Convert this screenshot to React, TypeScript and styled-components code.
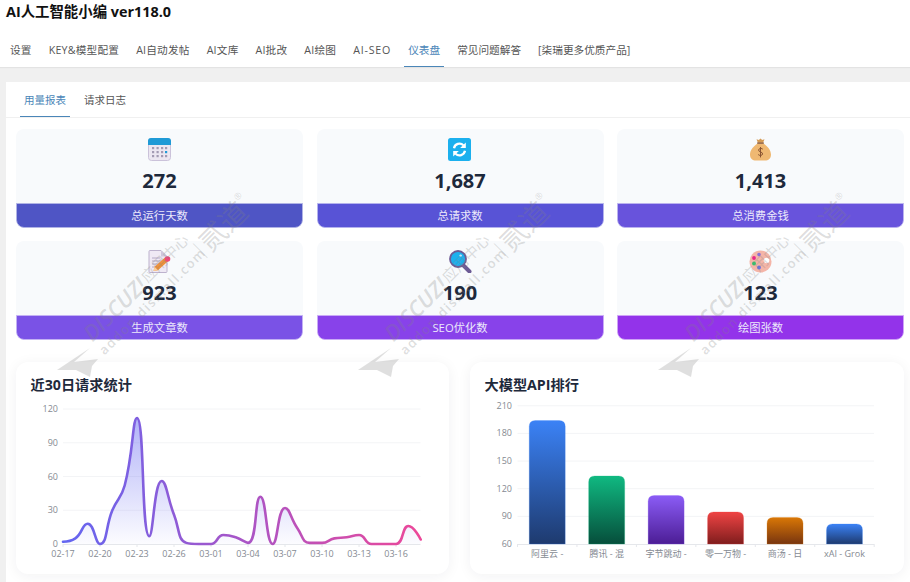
import React from "react";
import styled, { createGlobalStyle } from "styled-components";

const Global = createGlobalStyle`
  html, body { margin: 0; padding: 0; background: #f0f0f0; }
  body { font-family: "Open Sans", "Noto Sans CJK SC", sans-serif; overflow: hidden; }
  * { box-sizing: border-box; }
`;

const Page = styled.div`
  position: relative;
  width: 910px;
  height: 582px;
  overflow: hidden;
  background: #f0f0f0;
`;
const Header = styled.header`
  height: 67px;
  background: #fff;
  box-shadow: 0 1px 1px rgba(0, 0, 0, 0.05);
  display: flex;
  flex-direction: column;
`;
const Title = styled.h1`
  margin: 0;
  height: 31px;
  padding: 2px 0 0 6px;
  font-size: 14.4px;
  line-height: 20px;
  font-weight: 700;
  color: #111;
`;
const NavBar = styled.nav`
  flex: 1;
  display: flex;
  gap: 9px;
  padding-left: 6px;
`;
const Tab = styled.div<{ $active?: boolean; $track?: number }>`
  padding: 2px 4px 0;
  height: 100%;
  display: flex;
  align-items: center;
  white-space: nowrap;
  font-size: 10.67px;
  letter-spacing: ${(p) => p.$track ?? 0.2}px;
  color: ${(p) => (p.$active ? "#4a86b8" : "#555")};
  border-bottom: 1px solid ${(p) => (p.$active ? "#4a86b8" : "transparent")};
`;
const SubTab = styled(Tab)`
  padding-top: 0;
  font-size: 10.5px;
  letter-spacing: 0;
`;
const Panel = styled.main`
  margin: 15px 0 0 6px;
  height: 500px;
  background: #fff;
  display: flex;
  flex-direction: column;
`;
const SubNav = styled.div`
  height: 36px;
  flex: none;
  display: flex;
  gap: 10px;
  padding-left: 14px;
  border-bottom: 1px solid #f0f0f0;
`;
const Body = styled.div`
  padding: 11px 6px 0 10px;
`;
const StatGrid = styled.div`
  display: grid;
  grid-template-columns: repeat(3, 1fr);
  column-gap: 13.5px;
  row-gap: 13.5px;
`;
const StatCard = styled.div`
  height: 98.5px;
  border-radius: 8px;
  background: #f8fafc;
  display: flex;
  flex-direction: column;
  align-items: center;
  overflow: hidden;
`;
const StatTop = styled.div`
  flex: 1;
  display: flex;
  flex-direction: column;
  align-items: center;
  padding-top: 9px;
`;
const StatValue = styled.div`
  margin-top: 5px;
  font-size: 20px;
  line-height: 30px;
  font-weight: 700;
  color: #1e293b;
`;
const StatLabel = styled.div<{ $bg: string }>`
  width: 100%;
  height: 25px;
  flex: none;
  display: flex;
  align-items: center;
  justify-content: center;
  font-size: 11.3px;
  color: #ece9fb;
  background: ${(p) => p.$bg};
  border: 1px solid color-mix(in srgb, ${(p) => p.$bg} 45%, white);
  border-radius: 0 0 8px 8px;
`;
const ChartGrid = styled.div`
  margin-top: 22.5px;
  display: grid;
  grid-template-columns: 433px 434px;
  column-gap: 21px;
`;
const ChartCard = styled.section`
  height: 212px;
  background: #fff;
  border-radius: 12px;
  box-shadow: 0 2px 14px rgba(30, 41, 59, 0.06);
  overflow: hidden;
`;
const ChartTitle = styled.h2`
  margin: 0;
  height: 36px;
  padding: 13px 0 0 14.5px;
  font-size: 14.2px;
  line-height: 20px;
  font-weight: 700;
  color: #1e293b;
`;
const ChartSvg = styled.svg`
  display: block;
  text {
    font-family: "Open Sans", "Noto Sans CJK SC", sans-serif;
    font-size: 9px;
    fill: #858a92;
  }
`;
const WmUnit = styled.div<{ $x: number }>`
  position: absolute;
  left: ${(p) => p.$x}px;
  top: 340px;
  width: 0;
  height: 0;
  pointer-events: none;
  z-index: 5;
`;
const WmPlane = styled.svg`
  position: absolute;
  left: 0;
  top: 0;
  overflow: visible;
`;
const WmLine = styled.div<{ $dx: number; $dy: number; $size: number }>`
  position: absolute;
  left: ${(p) => p.$dx}px;
  top: ${(p) => p.$dy}px;
  display: flex;
  align-items: center;
  transform: rotate(-45deg);
  transform-origin: left bottom;
  white-space: nowrap;
  line-height: 1;
  font-size: ${(p) => p.$size}px;
  color: rgba(130, 130, 130, 0.27);
`;
const WmBrand = styled.span`
  font-style: italic;
  font-weight: 600;
  margin-right: 2px;
`;
const WmSmall = styled.span`
  font-size: 15px;
`;
const WmSplit = styled.span`
  font-weight: 300;
  font-size: 20px;
`;
const WmMark = styled.span`
  font-size: 9px;
  transform: translateY(-11px);
`;
const WmUrl = styled.span`
  letter-spacing: 1.5px;
  font-weight: 600;
`;

const CalendarIcon = () => (
  <svg width="23" height="23" viewBox="0 0 23 23">
    <rect x="0.5" y="0.5" width="22" height="22" rx="3" fill="#ece7f1" stroke="#cbc2da" />
    <path d="M0 7V3a3 3 0 0 1 3-3h17a3 3 0 0 1 3 3v4z" fill="#1f9ad6" />
    {[5, 9.5, 14, 18].flatMap((x, i) =>
      [10, 14, 18].map((y, j) => (
        <rect key={`${i}-${j}`} x={x - 1} y={y - 1} width="2.2" height="2.2" fill={i === 3 && j === 1 ? "#1f9ad6" : "#a39bb3"} />
      ))
    )}
  </svg>
);
const RefreshIcon = () => (
  <svg width="23" height="23" viewBox="0 0 23 23">
    <rect width="23" height="23" rx="2.5" fill="#1cb0ee" />
    <path d="M6 10.2a5.6 5.6 0 0 1 9.4-2.9" fill="none" stroke="#fff" strokeWidth="2.3" />
    <path d="M17.8 4.5v5.6h-5.6z" fill="#fff" />
    <path d="M17 12.8a5.6 5.6 0 0 1-9.4 2.9" fill="none" stroke="#fff" strokeWidth="2.3" />
    <path d="M5.2 18.5v-5.6h5.6z" fill="#fff" />
  </svg>
);
const BagIcon = () => (
  <svg width="23" height="23" viewBox="0 0 23 23">
    <path d="M7.5 1.2l2.3.8L11.5.4l1.7 1.6 2.3-.8-1.4 3.6H8.9z" fill="#d49a55" />
    <path d="M8.6 5.4h5.8c4 2.6 7.6 6.7 7.6 11 0 4-2.6 6.1-6 6.1H7c-3.4 0-6-2.1-6-6.1 0-4.3 3.6-8.4 7.6-11z" fill="#efb872" />
    <rect x="8.2" y="4.4" width="6.6" height="1.4" fill="#8a5a3a" />
    <path d="M13.8 11.2c-.6-1-3.9-1.4-4.2.8-.3 2.3 4.3 1.6 4 4-.3 2-3.7 1.7-4.4.5M11.5 9v10.4" fill="none" stroke="#8a5432" strokeWidth="1" />
  </svg>
);
const DocIcon = () => (
  <svg width="23" height="23" viewBox="0 0 23 23">
    <path d="M1 1.5A1 1 0 0 1 2 .5h11l6 6v15a1 1 0 0 1-1 1H2a1 1 0 0 1-1-1z" fill="#efe9f4" stroke="#bdb2cd" />
    <path d="M13 .5v6h6z" fill="#cfc6dc" />
    <path d="M4 8h8M4 11h11M4 14h9M4 17h5" stroke="#b5a9c6" strokeWidth="1" />
    <path d="M5.5 21l1-4.2L17 7.5l3.5 3.3L10 20.2z" fill="#f0913a" />
    <path d="M5.5 21l1-4.2 3.4 3.4z" fill="#f7d0a2" />
    <circle cx="19.5" cy="9" r="2.8" fill="#ec4a7a" />
  </svg>
);
const SearchIcon = () => (
  <svg width="23" height="23" viewBox="0 0 23 23">
    <path d="M13.5 14.5l7 7" stroke="#6c5b95" strokeWidth="4" strokeLinecap="round" />
    <circle cx="9" cy="9" r="8" fill="#1cb0ee" stroke="#6c5b95" strokeWidth="1.8" />
    <circle cx="11.6" cy="5.6" r="1.2" fill="#cdeefb" />
  </svg>
);
const PaletteIcon = () => (
  <svg width="23" height="23" viewBox="0 0 23 23">
    <ellipse cx="11.5" cy="11.5" rx="11" ry="11" fill="#f4b5a8" />
    <circle cx="5" cy="8" r="1.9" fill="#e8278a" />
    <circle cx="10" cy="4.6" r="1.8" fill="#8a6fd8" />
    <circle cx="5" cy="13.5" r="1.9" fill="#2fc46b" />
    <circle cx="10" cy="17.5" r="1.9" fill="#6a6fe0" />
    <circle cx="17.5" cy="10.5" r="2.8" fill="#fff" />
  </svg>
);

const stats = [
  { icon: <CalendarIcon />, value: "272", label: "总运行天数", bg: "#4f55c5" },
  { icon: <RefreshIcon />, value: "1,687", label: "总请求数", bg: "#5853d6" },
  { icon: <BagIcon />, value: "1,413", label: "总消费金钱", bg: "#6853dc" },
  { icon: <DocIcon />, value: "923", label: "生成文章数", bg: "#7a52e6" },
  { icon: <SearchIcon />, value: "190", label: "SEO优化数", bg: "#8842ea" },
  { icon: <PaletteIcon />, value: "123", label: "绘图张数", bg: "#9333ea" },
];

const navTabs: { label: string; active?: boolean; track?: number }[] = [
  { label: "设置" },
  { label: "KEY&模型配置" },
  { label: "AI自动发帖" },
  { label: "AI文库" },
  { label: "AI批改" },
  { label: "AI绘图" },
  { label: "AI-SEO", track: 0.8 },
  { label: "仪表盘", active: true, track: 0 },
  { label: "常见问题解答", track: 0 },
  { label: "[柒瑞更多优质产品]", track: 0 },
];

const lineData = [2, 5, 18, 0, 30, 52, 112, 7, 56, 26, 1, 0, 0, 8, 6, 1, 42, 0, 32, 14, 1, 1, 5, 6, 8, 0, 0, 0, 16, 4];
const X0 = 63;
const STEP = 12.335;
const Y0 = 544;
const K = 1.125;

const clamp = (v: number, a: number, b: number) => Math.min(Math.max(v, Math.min(a, b)), Math.max(a, b));

function smoothPath(pts: [number, number][], smooth = 0.5) {
  const n = pts.length;
  const outs: [number, number][] = [];
  const ins: [number, number][] = [];
  pts.forEach(([x, y], i) => {
    if (i === 0 || i === n - 1) {
      outs[i] = [x, y];
      ins[i] = [x, y];
      return;
    }
    const [px, py] = pts[i - 1];
    const [nx, ny] = pts[i + 1];
    const lp = Math.hypot(x - px, y - py);
    const ln = Math.hypot(nx - x, ny - y);
    const r = ln / (lp + ln);
    let ox = clamp(x + (nx - px) * smooth * r, x, nx);
    let oy = clamp(y + (ny - py) * smooth * r, y, ny);
    const ix = clamp(x - (ox - x) * (lp / ln), x, px);
    const iy = clamp(y - (oy - y) * (lp / ln), y, py);
    ox = x + (x - ix) * (ln / lp);
    oy = y + (y - iy) * (ln / lp);
    outs[i] = [ox, oy];
    ins[i] = [ix, iy];
  });
  let d = `M${pts[0][0]} ${pts[0][1]}`;
  for (let i = 1; i < n; i++) {
    d += `C${outs[i - 1][0].toFixed(2)} ${outs[i - 1][1].toFixed(2)} ${ins[i][0].toFixed(2)} ${ins[i][1].toFixed(2)} ${pts[i][0].toFixed(2)} ${pts[i][1].toFixed(2)}`;
  }
  return d;
}

const linePts = lineData.map((v, i) => [X0 + i * STEP, Y0 - v * K] as [number, number]);
const linePath = smoothPath(linePts);
const xTicks = ["02-17", "02-20", "02-23", "02-26", "03-01", "03-04", "03-07", "03-10", "03-13", "03-16"];

const LineChart = () => (
  <ChartSvg width="433" height="176" viewBox="16 398 433 176">
    <defs>
      <linearGradient id="stroke" gradientUnits="userSpaceOnUse" x1="63" x2="420" y1="0" y2="0">
        <stop offset="0" stopColor="#6366f1" />
        <stop offset="0.5" stopColor="#a855c7" />
        <stop offset="1" stopColor="#ec4899" />
      </linearGradient>
      <linearGradient id="area" gradientUnits="userSpaceOnUse" x1="0" x2="0" y1="418" y2="544">
        <stop offset="0" stopColor="#6366f1" stopOpacity="0.5" />
        <stop offset="1" stopColor="#6366f1" stopOpacity="0.02" />
      </linearGradient>
    </defs>
    {[0, 30, 60, 90, 120].map((v) => (
      <g key={v}>
        {v > 0 && <line x1="63" x2="420.5" y1={Y0 - v * K} y2={Y0 - v * K} stroke="#f3f4f6" />}
        <text x="58" y={Y0 - v * K + 3} textAnchor="end">{v}</text>
      </g>
    ))}
    <path d={`${linePath}L${linePts[29][0]} ${Y0}L63 ${Y0}Z`} fill="url(#area)" />
    <line x1="63" x2="420.5" y1={Y0 + 0.5} y2={Y0 + 0.5} stroke="#e5e7eb" />
    {xTicks.map((t, i) => (
      <g key={t}>
        <line x1={X0 + i * 3 * STEP} x2={X0 + i * 3 * STEP} y1={Y0} y2={Y0 + 3} stroke="#e5e7eb" />
        <text x={X0 + i * 3 * STEP} y="556.5" textAnchor="middle">{t}</text>
      </g>
    ))}
    <path d={linePath} fill="none" stroke="url(#stroke)" strokeWidth="2.6" strokeLinejoin="round" strokeLinecap="round" />
  </ChartSvg>
);

const bars = [
  { label: "阿里云 -", top: 420.5, c1: "#3b82f6", c2: "#1e3a6e" },
  { label: "腾讯 - 混", top: 476, c1: "#10b981", c2: "#064e3b" },
  { label: "字节跳动 -", top: 495.5, c1: "#8b5cf6", c2: "#4c1d95" },
  { label: "零一万物 -", top: 512, c1: "#ef4444", c2: "#7f1d1d" },
  { label: "商汤 - 日", top: 517.5, c1: "#d97706", c2: "#78350f" },
  { label: "xAI - Grok", top: 524, c1: "#3b82f6", c2: "#1e3a6e" },
];
const AX0 = 517.5;
const CAT = 59.45;

const BarChart = () => (
  <ChartSvg width="434" height="176" viewBox="470 398 434 176">
    <defs>
      {bars.map((b, i) => (
        <linearGradient key={i} id={`bar${i}`} x1="0" x2="0" y1="0" y2="1">
          <stop offset="0" stopColor={b.c1} />
          <stop offset="1" stopColor={b.c2} />
        </linearGradient>
      ))}
    </defs>
    {[60, 90, 120, 150, 180, 210].map((v, i) => {
      const y = Y0 - i * 27.65;
      return (
        <g key={v}>
          {i > 0 && <line x1={AX0} x2="874" y1={y} y2={y} stroke="#f3f4f6" />}
          <text x="512" y={y + 3} textAnchor="end">{v}</text>
        </g>
      );
    })}
    <line x1={AX0} x2="874" y1={Y0 + 0.5} y2={Y0 + 0.5} stroke="#e5e7eb" />
    {[0, 1, 2, 3, 4, 5, 6].map((i) => (
      <line key={i} x1={AX0 + i * CAT} x2={AX0 + i * CAT} y1={Y0} y2={Y0 + 3} stroke="#e5e7eb" />
    ))}
    {bars.map((b, i) => {
      const cx = AX0 + CAT * (i + 0.5);
      const l = cx - 18;
      const r = cx + 18;
      return (
        <g key={b.label}>
          <path
            d={`M${l} ${Y0}V${b.top + 6}Q${l} ${b.top} ${l + 6} ${b.top}H${r - 6}Q${r} ${b.top} ${r} ${b.top + 6}V${Y0}Z`}
            fill={`url(#bar${i})`}
            stroke={b.c1}
            strokeOpacity="0.25"
            strokeWidth="1"
          />
          <text x={cx} y="556.5" textAnchor="middle">{b.label}</text>
        </g>
      );
    })}
  </ChartSvg>
);

const Watermark = ({ x }: { x: number }) => (
  <WmUnit $x={x}>
    <WmPlane width="42" height="30" viewBox="0 0 42 30">
      <polygon points="0,30 33,8 17,22 41,19 35,26 33,37 19,30" fill="rgba(170,170,170,0.38)" />
    </WmPlane>
    <WmLine $dx={37} $dy={-18} $size={22}>
      <WmBrand>DISCUZ!</WmBrand>
      <WmSmall>应用中心</WmSmall>
    </WmLine>
    <WmLine $dx={148} $dy={-105} $size={28}>
      <WmSplit>|</WmSplit>
      <span>贰道</span>
      <WmMark>®</WmMark>
    </WmLine>
    <WmLine $dx={49} $dy={4} $size={13}>
      <WmUrl>addon.dismall.com</WmUrl>
    </WmLine>
  </WmUnit>
);

export default function App() {
  return (
    <Page>
      <Global />
      <Header>
        <Title>AI人工智能小编 ver118.0</Title>
        <NavBar>
          {navTabs.map((t) => (
            <Tab key={t.label} $active={t.active} $track={t.track}>{t.label}</Tab>
          ))}
        </NavBar>
      </Header>
      <Panel>
        <SubNav>
          <SubTab $active>用量报表</SubTab>
          <SubTab>请求日志</SubTab>
        </SubNav>
        <Body>
          <StatGrid>
            {stats.map((s) => (
              <StatCard key={s.label}>
                <StatTop>
                  {s.icon}
                  <StatValue>{s.value}</StatValue>
                </StatTop>
                <StatLabel $bg={s.bg}>{s.label}</StatLabel>
              </StatCard>
            ))}
          </StatGrid>
          <ChartGrid>
            <ChartCard>
              <ChartTitle>近30日请求统计</ChartTitle>
              <LineChart />
            </ChartCard>
            <ChartCard>
              <ChartTitle>大模型API排行</ChartTitle>
              <BarChart />
            </ChartCard>
          </ChartGrid>
        </Body>
      </Panel>
      {[57, 357.5, 658].map((x) => (
        <Watermark key={x} x={x} />
      ))}
    </Page>
  );
}
